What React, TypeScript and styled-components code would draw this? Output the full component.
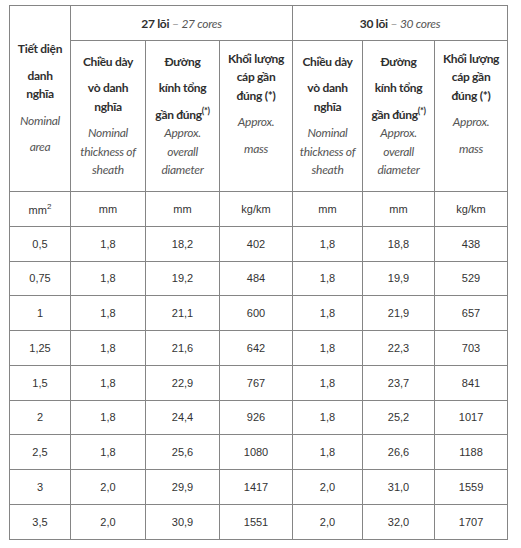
import React from "react";
import styled, { createGlobalStyle } from "styled-components";

const GlobalStyle = createGlobalStyle`
  body {
    margin: 0;
    background: #ffffff;
    font-family: Lato, "Noto Sans", sans-serif;
    color: #333333;
  }
`;

const Page = styled.div`
  padding: 5px 0 0 9px;
`;

const Table = styled.table`
  width: 499px;
  table-layout: fixed;
  border-collapse: collapse;
  border: 1px solid #858585;
`;

const HeadCell = styled.th<{ $lift?: number }>`
  border: 1px solid #858585;
  padding: 0 1px ${(p) => p.$lift ?? 0}px;
  vertical-align: middle;
  text-align: center;
  font-weight: 400;
  font-size: 12px;
  letter-spacing: -0.3px;
  color: #333333;
`;

const GroupCell = styled(HeadCell)`
  height: 34px;
`;

const Bold = styled.b`
  font-weight: 700;
  color: #2f2f2f;
`;

const Dash = styled.span`
  color: #9a9a9a;
`;

const Soft = styled.i`
  color: #555555;
`;

const Line = styled.span<{ $sep?: boolean; $italic?: boolean }>`
  display: block;
  line-height: 18.5px;
  margin-top: ${(p) => (p.$sep ? "8px" : "0")};
  font-weight: ${(p) => (p.$italic ? 400 : 700)};
  font-style: ${(p) => (p.$italic ? "italic" : "normal")};
  color: ${(p) => (p.$italic ? "#555555" : "#2f2f2f")};
  white-space: nowrap;
`;

const Star = styled.sup`
  font-size: 9px;
  line-height: 0;
  vertical-align: 5px;
`;

const Row = styled.tr`
  height: 34.78px;
`;

const Cell = styled.td`
  border: 1px solid #858585;
  padding: 0;
  text-align: center;
  vertical-align: middle;
  font-family: "Liberation Sans", Arial, sans-serif;
  font-size: 11px;
  color: #333333;
`;

const Sq = styled.sup`
  font-size: 8px;
`;

type HeadLine = { text: string; sep?: boolean; italic?: boolean; star?: boolean };
type Head = { lines: HeadLine[]; lift?: number };

const areaHead: HeadLine[] = [
  { text: "Tiết diện" },
  { text: "danh", sep: true },
  { text: "nghĩa" },
  { text: "Nominal", sep: true, italic: true },
  { text: "area", sep: true, italic: true },
];

const groupHeads: Head[] = [
  {
    lines: [
      { text: "Chiều dày" },
      { text: "vò danh", sep: true },
      { text: "nghĩa" },
      { text: "Nominal", sep: true, italic: true },
      { text: "thickness of", italic: true },
      { text: "sheath", italic: true },
    ],
  },
  {
    lines: [
      { text: "Đường" },
      { text: "kính tổng", sep: true },
      { text: "gần đúng", sep: true, star: true },
      { text: "Approx.", italic: true },
      { text: "overall", italic: true },
      { text: "diameter", italic: true },
    ],
  },
  {
    lift: 24,
    lines: [
      { text: "Khối lượng" },
      { text: "cáp gần" },
      { text: "đúng (*)" },
      { text: "Approx.", sep: true, italic: true },
      { text: "mass", sep: true, italic: true },
    ],
  },
];

const rows = [
  ["0,5", "1,8", "18,2", "402", "1,8", "18,8", "438"],
  ["0,75", "1,8", "19,2", "484", "1,8", "19,9", "529"],
  ["1", "1,8", "21,1", "600", "1,8", "21,9", "657"],
  ["1,25", "1,8", "21,6", "642", "1,8", "22,3", "703"],
  ["1,5", "1,8", "22,9", "767", "1,8", "23,7", "841"],
  ["2", "1,8", "24,4", "926", "1,8", "25,2", "1017"],
  ["2,5", "1,8", "25,6", "1080", "1,8", "26,6", "1188"],
  ["3", "2,0", "29,9", "1417", "2,0", "31,0", "1559"],
  ["3,5", "2,0", "30,9", "1551", "2,0", "32,0", "1707"],
];

const units = ["mm", "mm", "kg/km", "mm", "mm", "kg/km"];
const widths = [61, 75, 74, 73, 70, 72, 73];

const Lines: React.FC<{ lines: HeadLine[] }> = ({ lines }) => (
  <>
    {lines.map((l, i) => (
      <Line key={i} $sep={l.sep} $italic={l.italic}>
        {l.text}
        {l.star && <Star>(*)</Star>}
      </Line>
    ))}
  </>
);

const App = () => {
  return (
    <Page>
      <GlobalStyle />
      <Table>
        <colgroup>
          {widths.map((w, i) => (
            <col key={i} style={{ width: w }} />
          ))}
        </colgroup>
        <thead>
          <tr>
            <HeadCell rowSpan={2}>
              <Lines lines={areaHead} />
            </HeadCell>
            {["27", "30"].map((n) => (
              <GroupCell key={n} colSpan={3}>
                <Bold>{n} lõi</Bold> <Dash>–</Dash> <Soft>{n} cores</Soft>
              </GroupCell>
            ))}
          </tr>
          <tr style={{ height: 151 }}>
            {[...groupHeads, ...groupHeads].map((h, i) => (
              <HeadCell key={i} $lift={h.lift}>
                <Lines lines={h.lines} />
              </HeadCell>
            ))}
          </tr>
        </thead>
        <tbody>
          <Row>
            <Cell>
              mm<Sq>2</Sq>
            </Cell>
            {units.map((u, i) => (
              <Cell key={i}>{u}</Cell>
            ))}
          </Row>
          {rows.map((r, i) => (
            <Row key={i}>
              {r.map((v, j) => (
                <Cell key={j}>{v}</Cell>
              ))}
            </Row>
          ))}
        </tbody>
      </Table>
    </Page>
  );
};

export default App;
